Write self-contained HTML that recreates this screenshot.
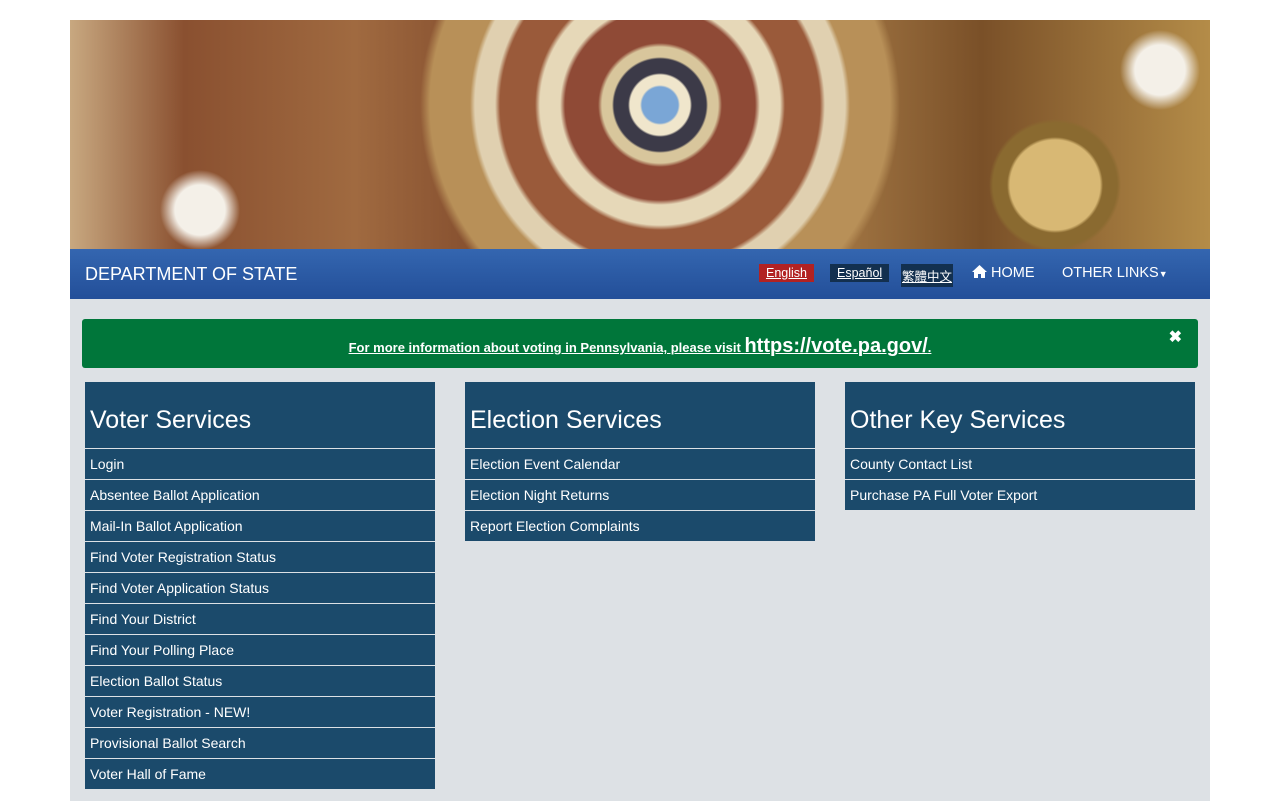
<!DOCTYPE html>
<html><head><meta charset="utf-8"><style>
body{margin:0;background:#fff;font-family:"Liberation Sans",Arial,sans-serif;}
.wrap{position:absolute;left:70px;top:20px;width:1140px;}
.ban{height:229px;background:
radial-gradient(circle at 590px 85px,#7aa6d6 0 18px,#f0e6cc 20px 30px,#3c3a48 32px 46px,#d8c69c 48px 58px,#8f4a36 62px 95px,#e6d8b8 100px 120px,#9a5a3a 125px 160px,#e0d0b0 165px 185px,#b89058 190px 230px,rgba(0,0,0,0) 240px),
radial-gradient(circle at 985px 165px,#d8b874 0 45px,#8a6a30 48px 62px,rgba(0,0,0,0) 66px),
radial-gradient(circle at 130px 190px,#f4f0e8 0 25px,rgba(0,0,0,0) 40px),
radial-gradient(circle at 1090px 50px,#f4f0e8 0 25px,rgba(0,0,0,0) 40px),
linear-gradient(90deg,#c8a880 0,#8a5030 10%,#a06a40 25%,#7a4428 40%,#a87c48 65%,#7a5028 80%,#b48c48 100%);}
.nav{height:50px;background:linear-gradient(#3466b0,#234f99);position:relative;color:#fff;}
.nav .t{position:absolute;left:15px;top:15px;font-size:18px;}
.lang{position:absolute;top:15px;font-size:12.5px;padding:2px 7px;text-decoration:underline;}
.nv{position:absolute;top:16px;font-size:14.5px;}
.main{background:#dde1e5;height:502px;position:relative;}
.alert{position:absolute;left:12px;top:20px;width:1116px;height:49px;background:#00763a;border-radius:3px;color:#fff;text-align:center;}
.alert span{position:absolute;left:0;right:0;top:16px;font-size:13px;font-weight:bold;text-decoration:underline;}
.alert b{font-size:20px;}
.x{position:absolute;right:16px;top:8px;font-size:16px;font-weight:bold;}
.col{position:absolute;top:83px;width:350px;background:#1b4a6b;color:#fff;}
.col h2{margin:0;height:66px;font-weight:normal;font-size:25px;padding-left:5px;line-height:76px;border-bottom:1px solid #dde1e5;}
.col div{height:30px;line-height:30px;font-size:14px;padding-left:5px;border-bottom:1px solid #dde1e5;}
.col div:last-child{border-bottom:none}
</style></head><body><div class="wrap">
<div class="ban"></div>
<div class="nav"><span class="t">DEPARTMENT OF STATE</span>
<span class="lang" style="left:689px;background:#b22222">English</span>
<span class="lang" style="left:760px;background:#13304f">Español</span>
<span class="lang" style="left:831px;background:#13304f;padding:2px 1px;font-family:'Liberation Sans','Noto Sans CJK TC',sans-serif">繁體中文</span>
<span class="nv" style="left:902px"><svg width="15" height="13" viewBox="0 0 15 13" style="vertical-align:-1px"><path d="M7.5 0L0 7h2v6h4V9h3v4h4V7h2z" fill="#fff"/></svg> HOME</span>
<span class="nv" style="left:992px">OTHER LINKS<span style="font-size:9px">▼</span></span>
</div>
<div class="main">
<div class="alert"><span>For more information about voting in Pennsylvania, please visit <b>https://vote.pa.gov/</b>.</span><i class="x" style="font-style:normal">✖</i></div>
<div class="col" style="left:15px"><h2>Voter Services</h2><div>Login</div><div>Absentee Ballot Application</div><div>Mail-In Ballot Application</div><div>Find Voter Registration Status</div><div>Find Voter Application Status</div><div>Find Your District</div><div>Find Your Polling Place</div><div>Election Ballot Status</div><div>Voter Registration - NEW!</div><div>Provisional Ballot Search</div><div>Voter Hall of Fame</div></div>
<div class="col" style="left:395px"><h2>Election Services</h2><div>Election Event Calendar</div><div>Election Night Returns</div><div>Report Election Complaints</div></div>
<div class="col" style="left:775px"><h2>Other Key Services</h2><div>County Contact List</div><div>Purchase PA Full Voter Export</div></div>
</div></div></body></html>
